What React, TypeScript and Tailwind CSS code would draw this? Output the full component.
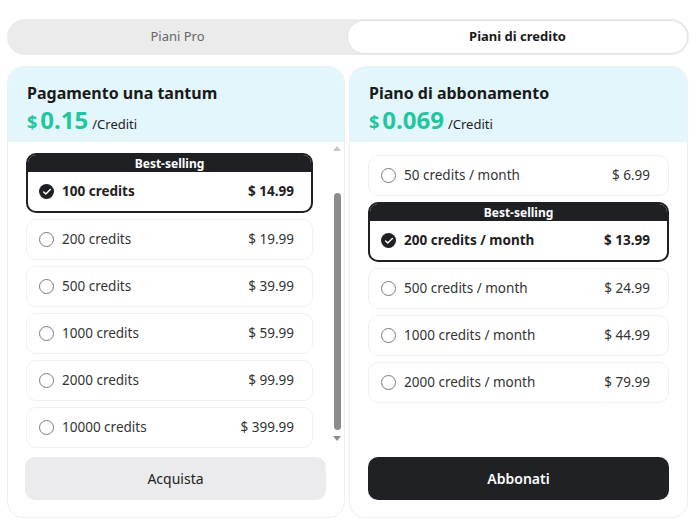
import { Check } from 'lucide-react';

interface Plan { label: string; price: string; best?: boolean; selected?: boolean; }

const oneTime: Plan[] = [
  { label: '100 credits', price: '$ 14.99', best: true, selected: true },
  { label: '200 credits', price: '$ 19.99' },
  { label: '500 credits', price: '$ 39.99' },
  { label: '1000 credits', price: '$ 59.99' },
  { label: '2000 credits', price: '$ 99.99' },
  { label: '10000 credits', price: '$ 399.99' },
];

const monthly: Plan[] = [
  { label: '50 credits / month', price: '$ 6.99' },
  { label: '200 credits / month', price: '$ 13.99', best: true, selected: true },
  { label: '500 credits / month', price: '$ 24.99' },
  { label: '1000 credits / month', price: '$ 44.99' },
  { label: '2000 credits / month', price: '$ 79.99' },
];

function PlanRow({ p }: { p: Plan }) {
  if (p.best) {
    return (
      <div className="rounded-[10px] border-2 border-[#1f2024] overflow-hidden bg-white">
        <div className="h-[17px] bg-[#1f2024] text-white text-[12px] font-bold leading-[17px] text-center">Best-selling</div>
        <div className="h-[39px] flex items-center px-[11px]">
          <span className="w-[15px] h-[15px] rounded-full bg-[#1f2024] flex items-center justify-center">
            <Check size={10} strokeWidth={3.5} color="white" />
          </span>
          <span className="ml-[8px] text-[13.5px] font-bold text-[#1f2024]">{p.label}</span>
          <span className="ml-auto mr-[6px] text-[13.5px] font-bold text-[#1f2024]">{p.price}</span>
        </div>
      </div>
    );
  }
  return (
    <div className="h-[41px] rounded-[10px] border border-[#f0f0f0] flex items-center px-[12px] bg-white">
      <span className="w-[15px] h-[15px] rounded-full border-[1.5px] border-[#7a7a7a]" />
      <span className="ml-[8px] text-[13.5px] text-[#333]">{p.label}</span>
      <span className="ml-auto mr-[6px] text-[13.5px] text-[#333]">{p.price}</span>
    </div>
  );
}

function Header({ title, price }: { title: string; price: string }) {
  return (
    <div className="h-[75px] bg-[#e3f6fb] px-[19px] pt-[14px]">
      <div className="text-[16px] font-bold text-[#1a1a1a] leading-[24px]">{title}</div>
      <div className="flex items-baseline text-[#20c79e] font-bold leading-[30px]">
        <span className="text-[18px]">$</span>
        <span className="text-[24px] ml-[3px]">{price}</span>
        <span className="text-[13px] font-normal text-[#222] ml-[4px]">/Crediti</span>
      </div>
    </div>
  );
}

export default function App() {
  return (
    <div className="w-[696px] h-[527px] bg-white px-[7px] pt-[19px]" style={{ fontFamily: '"Noto Sans", "Open Sans", sans-serif' }}>
      <div className="h-[36px] rounded-full bg-[#ebebeb] flex p-[1px]">
        <div className="flex-1 flex items-center justify-center text-[13px] text-[#666]">Piani Pro</div>
        <div className="flex-1 flex items-center justify-center text-[13px] font-bold text-[#1a1a1a] bg-white rounded-full border border-[#e4e4e4]">Piani di credito</div>
      </div>

      <div className="mt-[11px] flex gap-[4px]">
        <div className="w-[338px] h-[452px] rounded-[16px] border border-[#efefef] overflow-hidden flex flex-col">
          <Header title="Pagamento una tantum" price="0.15" />
          <div className="flex h-[309px]">
            <div className="w-[305px] pl-[18px] pt-[11px] flex flex-col gap-[6px]">
              {oneTime.map((p) => <PlanRow key={p.label} p={p} />)}
            </div>
            <div className="w-[12px] ml-[18px] flex flex-col items-center pt-[4px] pb-[4px]">
              <div className="w-0 h-0 border-l-[4px] border-r-[4px] border-b-[5px] border-l-transparent border-r-transparent border-b-[#c8c8c8]" />
              <div className="mt-[42px] w-[7px] h-[237px] rounded-full bg-[#8c8c8c]" />
              <div className="mt-[6px] w-0 h-0 border-l-[4px] border-r-[4px] border-t-[5px] border-l-transparent border-r-transparent border-t-[#8c8c8c]" />
            </div>
          </div>
          <div className="px-[17px] pt-[6px]">
            <button className="w-[301px] h-[43px] rounded-[10px] bg-[#ebebed] text-[14px] text-[#222]">Acquista</button>
          </div>
        </div>

        <div className="w-[339px] h-[452px] rounded-[16px] border border-[#efefef] overflow-hidden flex flex-col">
          <Header title="Piano di abbonamento" price="0.069" />
          <div className="h-[309px] px-[18px] pt-[13px] flex flex-col gap-[6px]">
            {monthly.map((p) => <PlanRow key={p.label} p={p} />)}
          </div>
          <div className="px-[18px] pt-[6px]">
            <button className="w-[301px] h-[43px] rounded-[10px] bg-[#202125] text-[14px] font-semibold text-white">Abbonati</button>
          </div>
        </div>
      </div>
    </div>
  );
}
